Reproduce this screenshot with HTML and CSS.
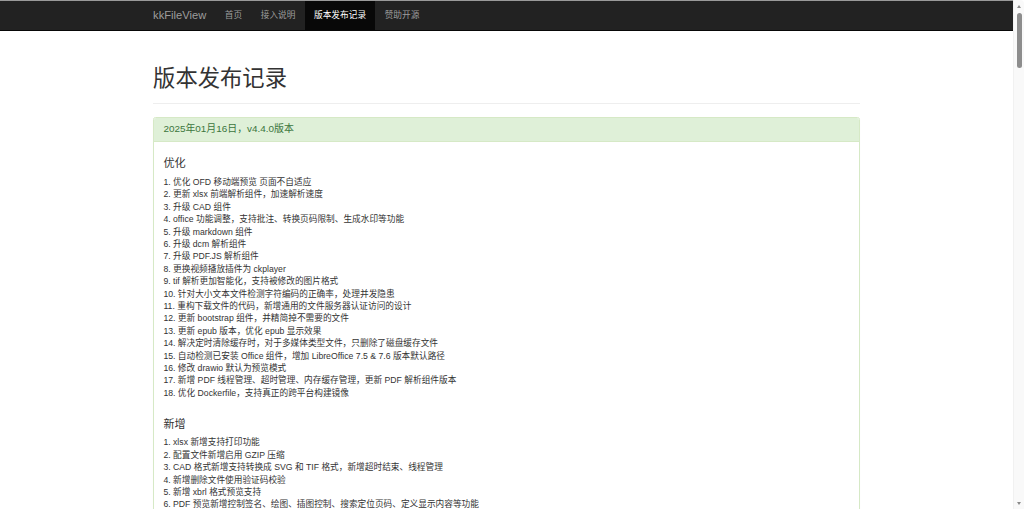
FILE: index.html
```html
<!DOCTYPE html>
<html lang="zh-CN">
<head>
<meta charset="utf-8">
<title>版本发布记录 - kkFileView</title>
<link rel="stylesheet" href="styles.css">
</head>
<body>
<div class="viewport">
  <nav class="navbar">
    <div class="container navbar-inner">
      <a class="brand" href="#">kkFileView</a>
      <ul class="nav">
        <li><a href="#">首页</a></li>
        <li><a href="#">接入说明</a></li>
        <li class="active"><a href="#">版本发布记录</a></li>
        <li><a href="#">赞助开源</a></li>
      </ul>
    </div>
  </nav>
  <main class="container page">
    <div class="page-header">
      <h1>版本发布记录</h1>
    </div>
    <section class="panel">
      <div class="panel-heading"><h3 class="panel-title">2025年01月16日，v4.4.0版本</h3></div>
      <div class="panel-body">
        <h4>优化</h4>
        <p class="notes">
          1. 优化 OFD 移动端预览 页面不自适应<br>
          2. 更新 xlsx 前端解析组件，加速解析速度<br>
          3. 升级 CAD 组件<br>
          4. office 功能调整，支持批注、转换页码限制、生成水印等功能<br>
          5. 升级 markdown 组件<br>
          6. 升级 dcm 解析组件<br>
          7. 升级 PDF.JS 解析组件<br>
          8. 更换视频播放插件为 ckplayer<br>
          9. tif 解析更加智能化，支持被修改的图片格式<br>
          10. 针对大小文本文件检测字符编码的正确率，处理并发隐患<br>
          11. 重构下载文件的代码，新增通用的文件服务器认证访问的设计<br>
          12. 更新 bootstrap 组件，并精简掉不需要的文件<br>
          13. 更新 epub 版本，优化 epub 显示效果<br>
          14. 解决定时清除缓存时，对于多媒体类型文件，只删除了磁盘缓存文件<br>
          15. 自动检测已安装 Office 组件，增加 LibreOffice 7.5 &amp; 7.6 版本默认路径<br>
          16. 修改 drawio 默认为预览模式<br>
          17. 新增 PDF 线程管理、超时管理、内存缓存管理，更新 PDF 解析组件版本<br>
          18. 优化 Dockerfile，支持真正的跨平台构建镜像
        </p>
        <h4>新增</h4>
        <p class="notes">
          1. xlsx 新增支持打印功能<br>
          2. 配置文件新增启用 GZIP 压缩<br>
          3. CAD 格式新增支持转换成 SVG 和 TIF 格式，新增超时结束、线程管理<br>
          4. 新增删除文件使用验证码校验<br>
          5. 新增 xbrl 格式预览支持<br>
          6. PDF 预览新增控制签名、绘图、插图控制、搜索定位页码、定义显示内容等功能
        </p>
      </div>
    </section>
  </main>
</div>
<div class="scrollbar" aria-hidden="true">
  <span class="sb-arrow sb-up"></span>
  <span class="sb-track"><span class="sb-thumb"></span></span>
  <span class="sb-arrow sb-down"></span>
</div>
</body>
</html>
```
FILE: styles.css
```css
html {
  background: #fff;
  overflow: hidden;
}

body {
  margin: 0;
  font-family: "Liberation Sans", "Noto Sans CJK SC", sans-serif;
  font-size: 8.68px;
  line-height: 12.4px;
  color: #333;
  background: #fff;
}

a {
  text-decoration: none;
}

.viewport {
  margin-right: 11px;
}

.container {
  width: 725.4px;
  margin: 0 auto;
  padding: 0 9.3px;
  box-sizing: border-box;
}

/* navbar */
.navbar {
  background: #222;
  border-top: 1px solid #9a9a9a;
  border-bottom: 1px solid #080808;
  height: 31px;
  box-sizing: border-box;
}

.navbar-inner {
  display: flex;
  align-items: stretch;
  height: 100%;
}

.brand {
  margin-left: -9.3px;
  padding: 0 9.3px;
  font-size: 11.16px;
  line-height: 29px;
  color: #9d9d9d;
}

.nav {
  display: flex;
  margin: 0;
  padding: 0;
  list-style: none;
}

.nav li a {
  display: block;
  padding: 0 9.3px;
  line-height: 29px;
  color: #9d9d9d;
}

.nav li.active a {
  background: #080808;
  color: #fff;
}

/* page */
.page {
  min-height: 4456px;
}

.page-header {
  margin: 36px 0 12.4px;
  padding-bottom: 5.6px;
  border-bottom: 1px solid #eee;
}

.page-header h1 {
  margin: 0 0 6.2px;
  font-size: 22.32px;
  line-height: 24.5px;
  font-weight: 400;
  color: #333;
}

.panel {
  border: 1px solid #d6e9c6;
  border-radius: 2.5px;
  background: #fff;
  box-shadow: 0 1px 1px rgba(0, 0, 0, 0.05);
}

.panel-heading {
  background: #dff0d8;
  color: #3c763d;
  padding: 6.2px 9.3px;
  border-bottom: 1px solid #d6e9c6;
  border-radius: 2px 2px 0 0;
}

.panel-title {
  margin: 0;
  font-size: 9.92px;
  line-height: 10.9px;
  font-weight: 400;
}

.panel-body {
  padding: 9.3px;
}

.panel-body h4 {
  margin: 6.2px 0;
  font-size: 11.16px;
  line-height: 12.3px;
  font-weight: 400;
  color: #333;
}

.notes {
  margin: 0 0 18.6px;
}

/* window scrollbar */
.scrollbar {
  position: fixed;
  top: 0;
  right: 0;
  bottom: 0;
  width: 11px;
  display: flex;
  flex-direction: column;
  background: #f9f9f9;
  border-left: 1px solid #f1f1f1;
  border-top-right-radius: 4px;
  box-sizing: border-box;
}

.sb-arrow {
  height: 12px;
  display: flex;
  align-items: center;
  justify-content: center;
}

.sb-arrow::before {
  content: "";
  width: 0;
  height: 0;
  border-left: 2.5px solid transparent;
  border-right: 2.5px solid transparent;
}

.sb-up::before {
  border-bottom: 3px solid #8a8a8a;
}

.sb-down::before {
  border-top: 3px solid #8a8a8a;
}

.sb-track {
  flex: 1;
  padding-top: 1px;
  display: flex;
  justify-content: center;
}

.sb-thumb {
  width: 5px;
  height: 55px;
  border-radius: 3px;
  background: #8d8d8d;
}
```
